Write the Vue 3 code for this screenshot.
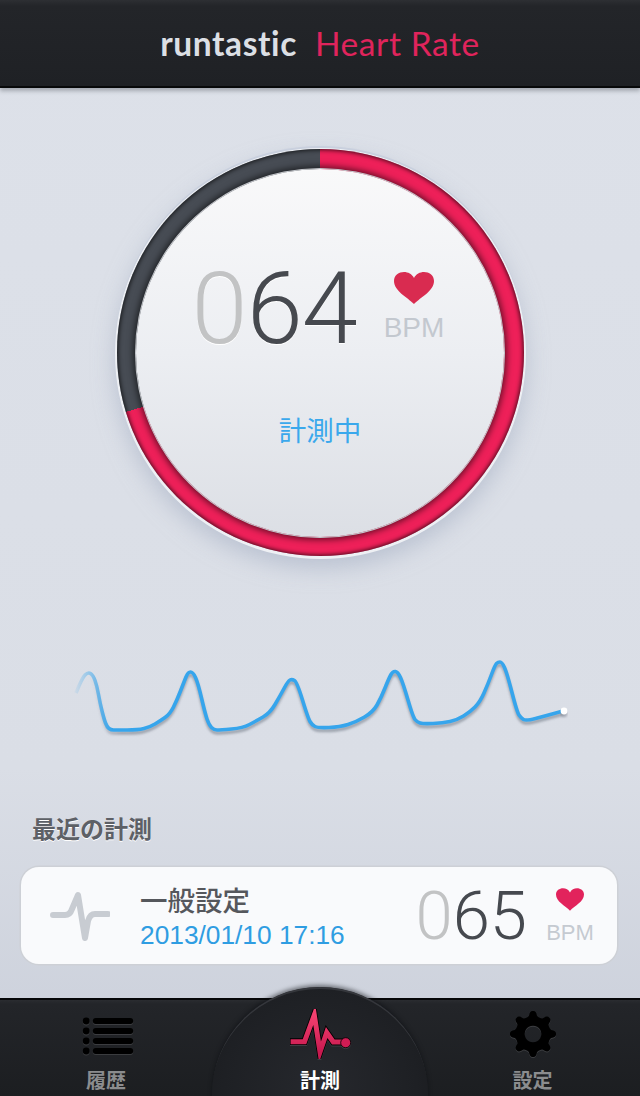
<script setup>
// pulse trace, picked off the screenshot
const points = [
  [76, 693], [82, 678], [88, 672], [93, 675], [97, 686], [100, 703], [104, 719], [107, 727], [111, 730], [116, 730],
  [138, 730], [150, 727], [160, 721], [170, 714], [177, 700], [184, 682], [188, 672], [193, 672], [198, 683], [205, 713],
  [209, 725], [214, 730], [220, 730], [243, 728], [256, 721], [270, 713], [280, 696], [288, 681], [292, 679], [297, 682], [308, 718],
  [312, 725], [318, 728], [340, 727], [356, 722], [373, 712], [381, 698], [389, 678], [393, 671], [398, 672], [403, 683],
  [413, 717], [417, 722], [423, 724], [443, 723], [457, 720], [470, 712], [480, 702], [488, 684], [495, 665], [498, 662],
  [502, 662], [507, 673], [517, 712], [521, 718], [526, 721], [545, 716], [563, 711]
]

function buildLine(list) {
  let d = `M${list[0][0]} ${list[0][1] - 650}`
  for (let i = 1; i < list.length - 1; i++) {
    const mx = (list[i][0] + list[i + 1][0]) / 2
    const my = (list[i][1] + list[i + 1][1]) / 2 - 650
    d += ` Q${list[i][0]} ${list[i][1] - 650} ${mx} ${my}`
  }
  const last = list[list.length - 1]
  return d + ` L${last[0]} ${last[1] - 650}`
}

const linePath = buildLine(points)

// eight small rounded teeth on a wide body
function buildGear() {
  const teeth = 8
  const step = Math.PI / teeth
  const at = (r, t) => `${(24 + r * Math.cos(t)).toFixed(1)} ${(24 + r * Math.sin(t)).toFixed(1)}`
  let d = ''
  for (let i = 0; i < teeth; i++) {
    const a = (i / teeth) * Math.PI * 2 - Math.PI / 2
    d += i === 0 ? `M${at(17.5, a - step)} ` : ''
    d += `Q${at(17.6, a - step * 0.72)} ${at(18.6, a - step * 0.55)} `
    d += `Q${at(23.6, a - step * 0.36)} ${at(23, a)} `
    d += `Q${at(23.6, a + step * 0.36)} ${at(18.6, a + step * 0.55)} `
    d += `Q${at(17.6, a + step * 0.72)} ${at(17.5, a + step)} `
  }
  return d + 'Z M24 15.7 a8.3 8.3 0 1 0 0.01 0 Z'
}

const gearPath = buildGear()
const heartPath = 'M20 32C13 25 0 19 0 9 0 3 5 0 10 0c4 0 8 2 10 6 2-4 6-6 10-6 5 0 10 3 10 9 0 10-13 16-20 23Z'
</script>

<template>
  <div class="app">
    <header class="top">
      <span class="logo">runtastic</span>
      <span class="title">Heart Rate</span>
    </header>

    <main class="main">
      <section class="gauge">
        <div class="disc">
          <div class="reading">
            <div class="number"><span class="zero">0</span>64</div>
            <div class="unit">
              <svg class="heart" viewBox="0 0 40 32"><path :d="heartPath" fill="#d92b50" /></svg>
              <span>BPM</span>
            </div>
          </div>
          <div class="status">計測中</div>
        </div>
      </section>

      <svg class="chart" width="640" height="100" viewBox="0 0 640 100">
        <defs>
          <linearGradient id="fade" gradientUnits="userSpaceOnUse" x1="72" y1="0" x2="112" y2="0">
            <stop offset="0" stop-color="#36a5ec" stop-opacity="0" />
            <stop offset="1" stop-color="#36a5ec" />
          </linearGradient>
          <linearGradient id="fadeShadow" gradientUnits="userSpaceOnUse" x1="90" y1="0" x2="120" y2="0">
            <stop offset="0" stop-color="#5a6270" stop-opacity="0" />
            <stop offset="1" stop-color="#5a6270" stop-opacity="0.45" />
          </linearGradient>
          <filter id="soft" x="-5%" y="-20%" width="110%" height="140%">
            <feGaussianBlur stdDeviation="1.2" />
          </filter>
        </defs>
        <path :d="linePath" transform="translate(0 3)" fill="none" stroke="url(#fadeShadow)" stroke-width="3.5" filter="url(#soft)" />
        <path :d="linePath" fill="none" stroke="url(#fade)" stroke-width="3.6" stroke-linejoin="round" />
        <circle cx="564" cy="64" r="3.2" fill="#5a6270" fill-opacity="0.4" filter="url(#soft)" />
        <circle cx="564" cy="61" r="3.4" fill="#fff" />
      </svg>

      <h2 class="recent">最近の計測</h2>

      <article class="card">
        <svg class="pulse" width="60" height="50" viewBox="0 0 60 50">
          <path d="M3 24H15Q20 24 22 18L28 4 35 47 38 30Q40 23 45 23H58" fill="none" stroke="#c8ccd2" stroke-width="6" stroke-linecap="round" stroke-linejoin="round" />
        </svg>
        <div class="card-text">
          <div class="card-title">一般設定</div>
          <div class="card-date">2013/01/10 17:16</div>
        </div>
        <div class="card-number"><span class="zero">0</span>65</div>
        <div class="card-unit">
          <svg class="card-heart" viewBox="0 0 40 32"><path :d="heartPath" fill="#e2235c" /></svg>
          <span>BPM</span>
        </div>
      </article>
    </main>

    <footer class="tabs">
      <div class="dome"></div>
      <div class="tab tab-list">
        <svg class="tab-icon list-icon" width="52" height="40" viewBox="0 0 52 40">
          <g fill="#000">
            <circle cx="4.2" cy="4" r="3.4" /><rect x="10.8" y="1" width="40.4" height="6" rx="3" />
            <circle cx="4.2" cy="14" r="3.4" /><rect x="10.8" y="11" width="40.4" height="6" rx="3" />
            <circle cx="4.2" cy="24" r="3.4" /><rect x="10.8" y="21" width="40.4" height="6" rx="3" />
            <circle cx="4.2" cy="34" r="3.4" /><rect x="10.8" y="31" width="40.4" height="6" rx="3" />
          </g>
        </svg>
        <span class="tab-label">履歴</span>
      </div>
      <div class="tab active">
        <svg class="tab-icon" width="62" height="50" viewBox="0 0 62 50">
          <defs>
            <linearGradient id="beat" x1="0" y1="0" x2="0" y2="1">
              <stop offset="0" stop-color="#f4406f" />
              <stop offset="1" stop-color="#c81a50" />
            </linearGradient>
          </defs>
          <path d="M1 32.7H15.5L25.3 6 31 43 37.7 23.5 44.3 33H56" fill="none" stroke="#000" stroke-width="6.8" stroke-linejoin="miter" stroke-miterlimit="8" />
          <path d="M1.6 32.7H15.5L25.3 6 31 43 37.7 23.5 44.3 33H56" fill="none" stroke="url(#beat)" stroke-width="5" stroke-linejoin="miter" stroke-miterlimit="8" />
          <circle cx="56.7" cy="33.7" r="5" fill="#d11c54" stroke="#000" stroke-width="0.8" />
        </svg>
        <span class="tab-label">計測</span>
      </div>
      <div class="tab tab-gear">
        <svg class="tab-icon" width="48" height="48" viewBox="0 0 48 48">
          <path :d="gearPath" fill="#000" fill-rule="evenodd" />
        </svg>
        <span class="tab-label">設定</span>
      </div>
    </footer>
  </div>
</template>

<style>
body {
  background: #1d1f23;
}
</style>

<style scoped>
.app {
  width: 640px;
  height: 1096px;
  display: flex;
  flex-direction: column;
  overflow: hidden;
  font-family: "Liberation Sans", "Noto Sans CJK JP", sans-serif;
  background: linear-gradient(180deg, #dde1e9 0%, #dadee6 70%, #c9ced9 100%);
}

.top {
  height: 88px;
  flex: none;
  display: flex;
  align-items: center;
  justify-content: center;
  gap: 18px;
  box-sizing: border-box;
  background: linear-gradient(180deg, #2d2f33 0, #232529 6px, #1f2125 100%);
  border-bottom: 2px solid #08090a;
  box-shadow: 0 3px 4px rgba(60, 65, 75, 0.35);
  position: relative;
  z-index: 2;
}
.logo {
  font-family: Lato, sans-serif;
  font-weight: 700;
  font-size: 33.5px;
  letter-spacing: 0.6px;
  color: #dcdfe4;
}
.title {
  font-family: Lato, sans-serif;
  font-weight: 400;
  font-size: 33.5px;
  letter-spacing: 0.6px;
  color: #e0245c;
}

.main {
  flex: 1;
  display: flex;
  flex-direction: column;
  align-items: stretch;
}

.gauge {
  width: 407px;
  height: 407px;
  margin: 61px auto 0;
  flex: none;
  box-sizing: border-box;
  border-radius: 50%;
  display: flex;
  align-items: center;
  justify-content: center;
  background: conic-gradient(#ee2059 0deg 253deg, #474c54 253deg 360deg);
  box-shadow:
    inset 0 0 4px 1px rgba(0, 0, 0, 0.7),
    0 1px 0 2px #eef0f4,
    0 -1px 0 2px #c9d0de,
    0 10px 22px 2px rgba(165, 175, 195, 0.6);
}
.disc {
  width: 368px;
  height: 368px;
  border-radius: 50%;
  display: flex;
  flex-direction: column;
  align-items: center;
  background: linear-gradient(180deg, #f9f9fa 0%, #eceef2 50%, #dcdfe5 100%);
  box-shadow:
    0 0 0 1px #c5c8cd,
    0 0 6px 3px rgba(0, 0, 0, 0.55);
}
.reading {
  display: flex;
  align-items: flex-start;
  margin-top: 90px;
  margin-right: 4px;
  height: 100px;
}
.number {
  font-family: Roboto, "Liberation Sans", sans-serif;
  font-weight: 300;
  font-size: 101px;
  line-height: 100px;
  letter-spacing: -1px;
  color: #46494f;
  text-shadow: 0 1px 0 #fff;
}
.zero {
  color: #c2c3c4;
}
.unit {
  display: flex;
  flex-direction: column;
  align-items: center;
  margin-left: 27px;
  margin-top: 13px;
  font-size: 28px;
  line-height: 32px;
  color: #c3c8cf;
}
.heart {
  width: 40px;
  height: 32px;
  margin-bottom: 8px;
}
.status {
  margin-top: 55px;
  font-size: 27.5px;
  font-weight: 400;
  line-height: 36px;
  color: #3aa8ec;
}

.chart {
  display: block;
  margin-top: 94px;
  flex: none;
}

.recent {
  margin: 65px 0 0 32px;
  font-size: 24px;
  line-height: 30px;
  font-weight: 700;
  color: #5d6066;
  text-shadow: 0 1px 0 #fff;
}

.card {
  margin: 22px 23px 0 21px;
  height: 97px;
  box-sizing: border-box;
  flex: none;
  display: flex;
  align-items: center;
  background: #f9fafc;
  border-radius: 18px;
  box-shadow: 0 0 0 1.5px #cdd0d6;
}
.pulse {
  margin-left: 29px;
  flex: none;
}
.card-text {
  margin-left: 30px;
  padding-top: 3px;
  flex: 1;
}
.card-title {
  font-size: 27.5px;
  line-height: 36px;
  font-weight: 500;
  color: #55575c;
}
.card-date {
  font-size: 26.3px;
  line-height: 30px;
  color: #2f9de2;
}
.card-number {
  font-family: Roboto, "Liberation Sans", sans-serif;
  font-weight: 300;
  font-size: 67px;
  line-height: 70px;
  color: #46494f;
}
.card-unit {
  width: 48px;
  margin: 0 23px 0 19px;
  padding-top: 2px;
  display: flex;
  flex-direction: column;
  align-items: center;
  font-size: 22px;
  line-height: 26px;
  color: #c5cad1;
}
.card-heart {
  width: 28px;
  height: 23px;
  margin-bottom: 9px;
}

.tabs {
  height: 98px;
  flex: none;
  position: relative;
  display: grid;
  grid-template-columns: 212px 216px 209px;
  background: linear-gradient(180deg, #2a2c30 0, #232529 4px, #1c1e21 100%);
  border-top: 2px solid #060708;
  box-sizing: border-box;
}
.dome {
  position: absolute;
  left: 212px;
  top: -13px;
  width: 216px;
  height: 216px;
  border-radius: 50%;
  background: radial-gradient(circle at 50% 45%, #26282d 0%, #1e2024 60%, #17181b 100%);
  box-shadow:
    inset 0 3px 0 -1px #35373c,
    0 -2px 4px rgba(10, 12, 16, 0.5);
}
.tab {
  position: relative;
  display: flex;
  flex-direction: column;
  align-items: center;
  height: 96px;
  padding-top: 9px;
  box-sizing: border-box;
}
.tab-list {
  padding-top: 17px;
}
.tab-gear {
  padding-top: 10px;
}
.tab-icon {
  display: block;
  flex: none;
  filter: drop-shadow(0 1px 0 rgba(255, 255, 255, 0.12));
}
.list-icon {
  margin-left: 3px;
}
.tab-label {
  margin-top: auto;
  margin-bottom: 2px;
  font-size: 20px;
  line-height: 26px;
  font-weight: 700;
  color: #8b8c8e;
}
.tab.active .tab-label {
  color: #fff;
}
</style>
